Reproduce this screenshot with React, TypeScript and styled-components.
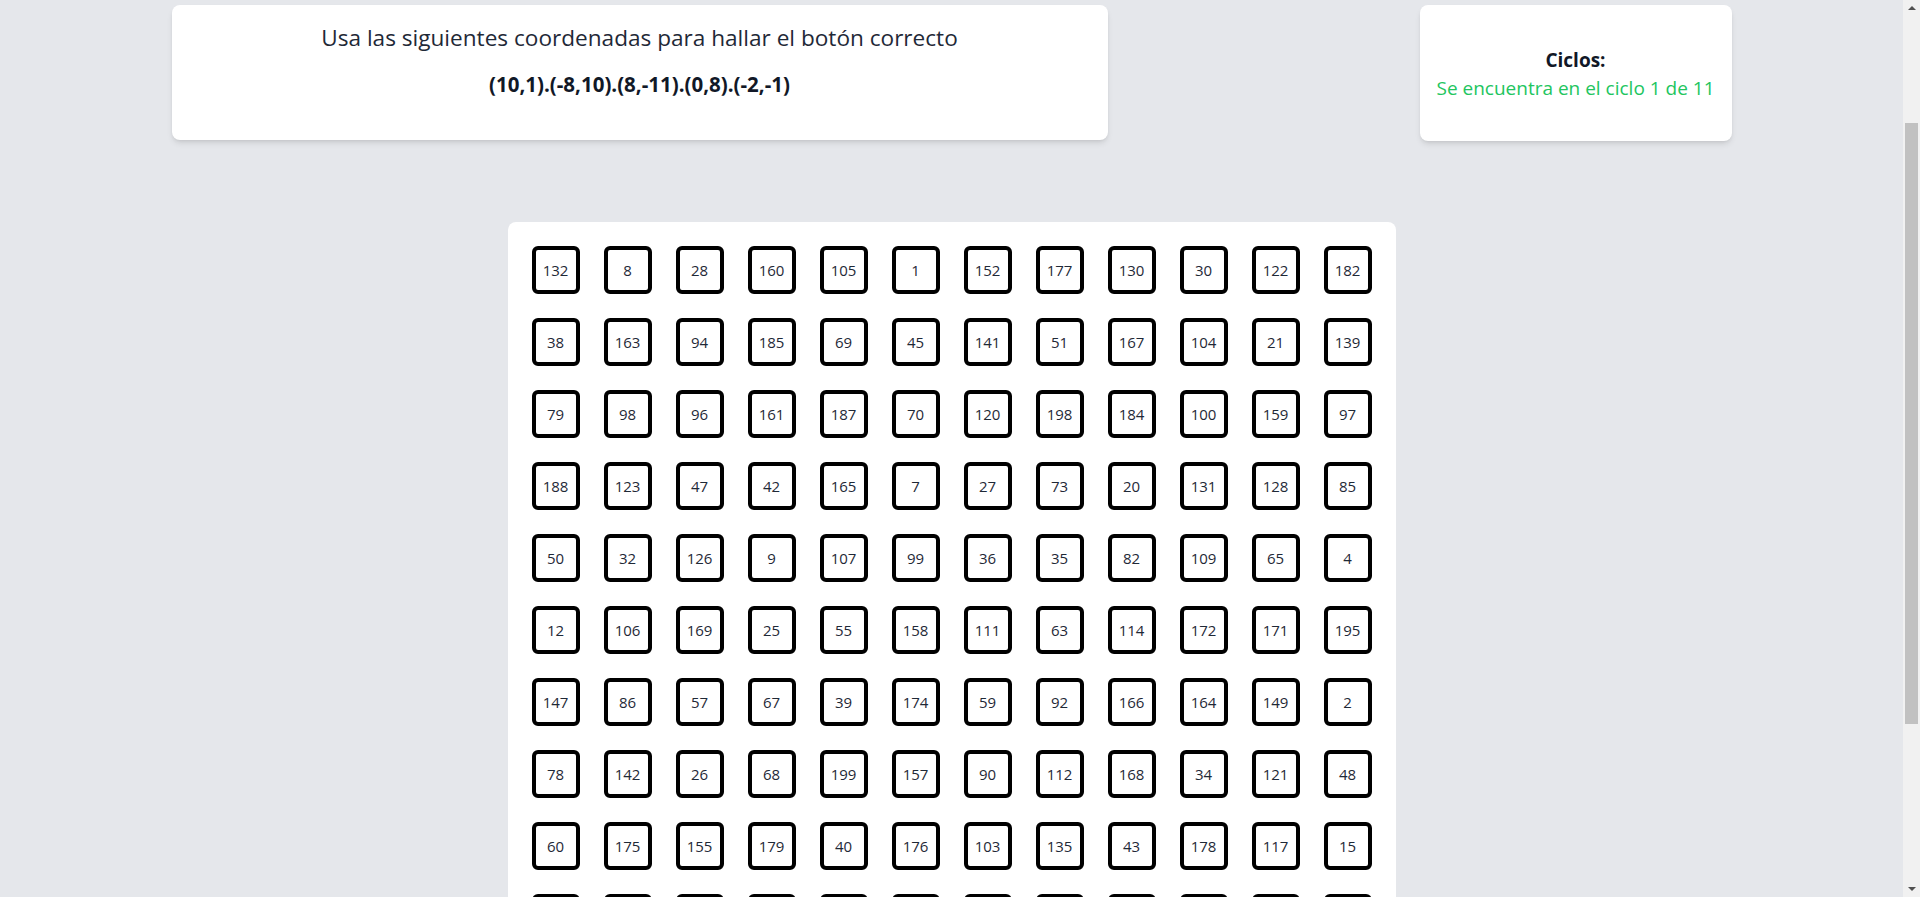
import React, { useLayoutEffect, useState } from "react";
import styled, { createGlobalStyle } from "styled-components";

const GlobalStyle = createGlobalStyle`
  html, body {
    margin: 0;
    padding: 0;
    background: #e5e7eb;
    font-family: "Open Sans", "Noto Sans", Arial, sans-serif;
    color: #1f2937;
  }
  * { box-sizing: border-box; }
`;

const SCROLLBAR = 17;

const Page = styled.main`
  padding: 163px ${SCROLLBAR}px 19px 0;
`;

const TopRow = styled.section`
  max-width: 1560px;
  margin: 0 auto;
  display: grid;
  grid-template-columns: repeat(5, 1fr);
`;

const Card = styled.div`
  background: #ffffff;
  border-radius: 8px;
  box-shadow: 0 4px 6px -1px rgba(0, 0, 0, 0.1), 0 2px 4px -2px rgba(0, 0, 0, 0.1);
`;

const InstructionCard = styled(Card)`
  grid-column: 1 / span 3;
  height: 135px;
  padding-top: 17px;
  text-align: center;
`;

const Heading = styled.h2`
  margin: 0;
  font-size: 22.6px;
  line-height: 32px;
  font-weight: 400;
  color: #1f2937;
`;

const Coordinates = styled.p`
  margin: 16px 0 0;
  font-size: 20.5px;
  line-height: 28px;
  font-weight: 700;
  color: #111827;
`;

const CycleCard = styled(Card)`
  grid-column: 5;
  height: 136px;
  padding-top: 2px;
  display: flex;
  flex-direction: column;
  align-items: center;
  justify-content: center;
  text-align: center;
  font-size: 19px;
  line-height: 28px;
`;

const CycleTitle = styled.span`
  font-weight: 700;
  color: #111827;
`;

const CycleText = styled.span`
  color: #22c55e;
`;

const BoardWrap = styled.section`
  margin-top: 81px;
  display: flex;
  justify-content: center;
`;

const Board = styled(Card)`
  padding: 24px;
  display: grid;
  grid-template-columns: repeat(12, 48px);
  grid-auto-rows: 48px;
  gap: 24px;
  box-shadow: none;
`;

const NumberButton = styled.button`
  width: 48px;
  height: 48px;
  padding: 0;
  background: #ffffff;
  border: 4px solid #000000;
  border-radius: 6px;
  font-family: "Open Sans", "Noto Sans", Arial, sans-serif;
  font-size: 15px;
  color: #1f2937;
  cursor: pointer;
  display: flex;
  align-items: center;
  justify-content: center;
`;

/* Scroll indicator lying over the right edge of the viewport */
const ScrollTrack = styled.aside`
  position: fixed;
  top: 0;
  right: 0;
  width: ${SCROLLBAR}px;
  height: 100vh;
  background: #f1f1f1;
`;

const Arrow = styled.span<{ $down?: boolean }>`
  position: absolute;
  left: 5px;
  width: 0;
  height: 0;
  border-left: 4px solid transparent;
  border-right: 4px solid transparent;
  ${(p) =>
    p.$down
      ? "bottom: 6px; border-top: 4px solid #505050;"
      : "top: 6px; border-bottom: 4px solid #505050;"}
`;

const Thumb = styled.div`
  position: absolute;
  left: 2px;
  width: 13px;
  background: #c1c1c1;
`;

const numbers: number[] = [
  132, 8, 28, 160, 105, 1, 152, 177, 130, 30, 122, 182,
  38, 163, 94, 185, 69, 45, 141, 51, 167, 104, 21, 139,
  79, 98, 96, 161, 187, 70, 120, 198, 184, 100, 159, 97,
  188, 123, 47, 42, 165, 7, 27, 73, 20, 131, 128, 85,
  50, 32, 126, 9, 107, 99, 36, 35, 82, 109, 65, 4,
  12, 106, 169, 25, 55, 158, 111, 63, 114, 172, 171, 195,
  147, 86, 57, 67, 39, 174, 59, 92, 166, 164, 149, 2,
  78, 142, 26, 68, 199, 157, 90, 112, 168, 34, 121, 48,
  60, 175, 155, 179, 40, 176, 103, 135, 43, 178, 117, 15,
  137, 18, 64, 191, 11, 146, 83, 153, 24, 189, 74, 116,
  5, 181, 101, 56, 133, 193, 44, 124, 88, 13, 170, 62,
  145, 29, 192, 77, 118, 3, 162, 53, 197, 108, 37, 150,
];

export default function App() {
  const [thumb, setThumb] = useState({ top: 123, height: 602 });

  useLayoutEffect(() => {
    window.scrollTo(0, 158);
    const update = () => {
      const doc = document.documentElement;
      const track = window.innerHeight - 2 * SCROLLBAR;
      const total = Math.max(doc.scrollHeight, 1);
      setThumb({
        top: SCROLLBAR + (track * window.scrollY) / total,
        height: (track * window.innerHeight) / total,
      });
    };
    update();
    window.addEventListener("scroll", update);
    window.addEventListener("resize", update);
    return () => {
      window.removeEventListener("scroll", update);
      window.removeEventListener("resize", update);
    };
  }, []);

  return (
    <>
      <GlobalStyle />
      <Page>
        <TopRow>
          <InstructionCard>
            <Heading>Usa las siguientes coordenadas para hallar el botón correcto</Heading>
            <Coordinates>(10,1).(-8,10).(8,-11).(0,8).(-2,-1)</Coordinates>
          </InstructionCard>
          <CycleCard>
            <CycleTitle>Ciclos:</CycleTitle>
            <CycleText>Se encuentra en el ciclo 1 de 11</CycleText>
          </CycleCard>
        </TopRow>
        <BoardWrap>
          <Board>
            {numbers.map((n, i) => (
              <NumberButton key={i}>{n}</NumberButton>
            ))}
          </Board>
        </BoardWrap>
      </Page>
      <ScrollTrack aria-hidden="true">
        <Arrow />
        <Thumb style={{ top: thumb.top, height: thumb.height }} />
        <Arrow $down />
      </ScrollTrack>
    </>
  );
}
